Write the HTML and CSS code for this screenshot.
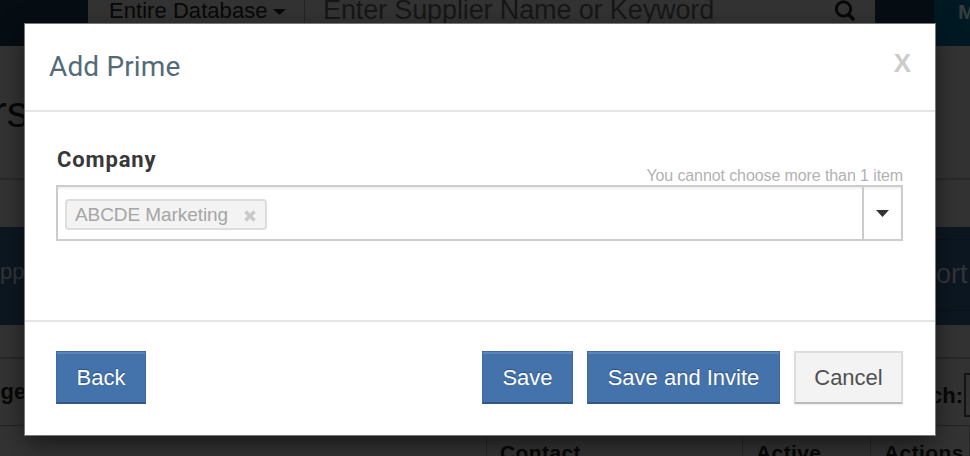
FILE: index.html
```html
<!DOCTYPE html>
<html lang="en">
<head>
<meta charset="utf-8">
<title>Add Prime</title>
<link rel="stylesheet" href="styles.css">
</head>
<body>
<div class="page">
  <header class="topbar">
    <div class="search">
      <div class="scope"><span class="scope-text">Entire Database</span><svg class="caret" width="13" height="6" viewBox="0 0 13 6"><path d="M0 0h13L6.5 6z" fill="currentColor"/></svg></div>
      <div class="query"><span class="query-text">Enter Supplier Name or Keyword</span>
        <svg width="22" height="22" viewBox="0 0 22 22" fill="none" stroke="#080808" stroke-width="2.9"><circle cx="9.5" cy="9" r="7.2"/><path d="M14.5 14.5l5.5 5.5" stroke-width="3.6"/></svg></div>
    </div>
    <div class="topbar-action">M</div>
  </header>
  <div class="heading">rs</div>
  <div class="spacer"></div>
  <div class="banner"><span class="banner-left">pp</span><span class="banner-right">ort</span></div>
  <div class="spacer-small"></div>
  <div class="filters"><span class="range">nge</span><span class="find">ch:</span><span class="find-box"></span></div>
  <div class="columns"><span></span><span>Contact</span><span>Active</span><span>Actions</span></div>
</div>
<div class="modal">
  <div class="modal-header"><span class="title">Add Prime</span><span class="close">X</span></div>
  <div class="modal-body">
    <div class="labels"><span class="label">Company</span><span class="hint">You cannot choose more than 1 item</span></div>
    <div class="select">
      <div class="choices"><span class="tag"><span class="tag-text">ABCDE Marketing</span><svg width="12" height="12" viewBox="0 0 12 12" stroke="#c9c9c9" stroke-width="3.4"><path d="M1.5 1.5l9 9M10.5 1.5l-9 9"/></svg></span></div>
      <div class="toggle"><svg width="13" height="7" viewBox="0 0 13 7"><path d="M0 0h13L6.5 7z" fill="#333"/></svg></div>
    </div>
  </div>
  <div class="modal-footer">
    <button class="btn back">Back</button>
    <button class="btn save">Save</button>
    <button class="btn invite">Save and Invite</button>
    <button class="btn cancel">Cancel</button>
  </div>
</div>
</body>
</html>
```
FILE: styles.css
```css
* { box-sizing: border-box; }
body { margin: 0; width: 970px; height: 456px; overflow: hidden; font-family: "Liberation Sans", Arial, sans-serif; background: #333; }
.page { width: 970px; height: 456px; overflow: hidden; color: #080808; white-space: nowrap; }
.topbar { display: flex; height: 46px; padding-left: 88px; background: #060d13; }
.search { display: flex; width: 787px; background: #333; line-height: 20px; }
.scope { display: flex; width: 217px; padding-left: 21px; border-right: 1px solid #252525; font-size: 22px; }
.scope-text { width: 158px; letter-spacing: 0.05px; line-height: 21px; }
.caret { margin: 9px 0 0 6px; }
.query { display: flex; flex: 1; justify-content: space-between; padding: 0 19px 0 18px; font-size: 27px; color: #171717; letter-spacing: -0.12px; }
.topbar-action { width: 36px; margin-left: auto; padding-left: 24px; background: #001923; color: #343c3f; font-size: 21px; font-weight: bold; line-height: 23px; }
.heading { height: 134px; padding: 38px 0 0; border-bottom: 2px solid #292929; font-size: 44px; line-height: 56px; text-indent: -8px; }
.spacer { height: 47px; }
.banner { display: flex; height: 98px; justify-content: space-between; background: #0d1721; color: #343536; line-height: 90px; font-size: 22px; }
.banner-right { width: 34px; height: 72px; margin-top: 12px; border: 1px solid #0a121a; border-width: 1px 0; font-size: 27px; line-height: 68px; }
.spacer-small { height: 32px; }
.filters { display: flex; height: 69px; border-top: 2px solid #292929; border-bottom: 1px solid #252525; font-weight: bold; font-size: 22px; line-height: 65px; }
.range { flex: none; width: 930px; text-indent: -13px; }
.find { flex: none; width: 34px; line-height: 73px; font-size: 22px; }
.find-box { flex: none; width: 60px; height: 44px; margin-top: 14px; border: 2px solid #151515; }
.columns { display: grid; grid-template-columns: 487px 256px 128px 1fr; height: 40px; font-size: 21px; font-weight: bold; letter-spacing: 0.4px; line-height: 54px; }
.columns span { padding-left: 13px; border-right: 1px solid #272727; }
.modal { position: absolute; left: 25px; top: 24px; width: 910px; height: 411px; background: #fff; box-shadow: 0 0 0 1px #777, 0 8px 24px rgba(0,0,0,.55); }
.modal-header { display: flex; justify-content: space-between; height: 88px; padding: 0 24px; border-bottom: 2px solid #e5e5e5; }
.title { font: 28px/85px Roboto, sans-serif; color: #536b78; letter-spacing: .15px; }
.close { font: bold 26px/78px "Liberation Sans", sans-serif; color: #ccc; }
.modal-body { height: 210px; padding: 37px 32px 0 31px; border-bottom: 2px solid #e5e5e5; }
.labels { display: flex; justify-content: space-between; height: 36px; }
.label { padding-left: 1px; font: bold 22px/21px Roboto, sans-serif; color: #383838; letter-spacing: .85px; }
.hint { padding-top: 18px; font-size: 16px; line-height: 18px; color: #b2b2b2; letter-spacing: -.1px; }
.select { display: flex; height: 56px; border: 2px solid #ccc; box-shadow: inset 0 2px 2px #f1f1f1; }
.choices { flex: 1; padding: 12px 0 0 7px; }
.tag { display: flex; align-items: center; width: 202px; height: 31px; padding-left: 8px; border: 2px solid #ddd; border-radius: 4px; background: #f3f3f3; color: #a5a5a5; font-size: 19px; line-height: 27px; }
.tag-text { width: 169px; white-space: nowrap; letter-spacing: -.07px; }
.tag svg { margin-top: 3px; }
.toggle { display: flex; width: 39px; align-items: center; justify-content: center; border-left: 2px solid #ccc; }
.modal-footer { display: flex; height: 113px; padding: 29px 32px 0 31px; }
.btn { height: 53px; padding: 0; border: 1px solid #3e6aa1; border-bottom: 2px solid #315785; border-radius: 0; background: #4472ab; box-shadow: inset 0 2px #5b85b9; color: #fff; font: 22px/49px "Liberation Sans", sans-serif; text-shadow: 0 -1px 1px #294f7d; white-space: nowrap; }
.back { width: 90px; margin-right: auto; }
.save { width: 91px; margin-right: 14px; }
.invite { width: 193px; margin-right: 14px; }
.cancel { width: 109px; background: #f3f3f3; color: #505050; border: 2px solid #ddd; border-bottom-color: #bbb; box-shadow: 0 1px 2px #eee; text-shadow: none; }
```
